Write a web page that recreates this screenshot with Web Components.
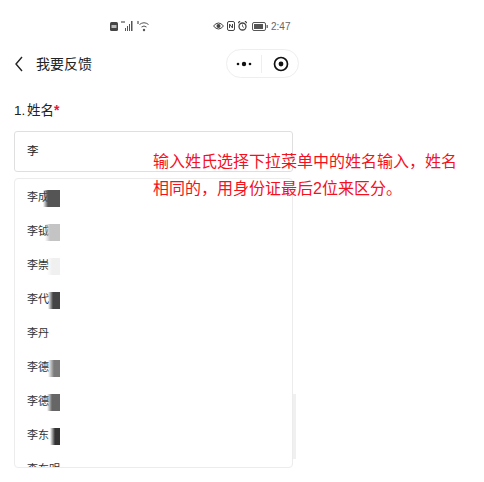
<!DOCTYPE html>
<html>
<head>
<meta charset="utf-8">
<style>
  html, body { margin: 0; padding: 0; background: #fff; }
  body { width: 484px; height: 482px; overflow: hidden; position: relative; font-family: "Liberation Sans", "Noto Sans CJK SC", sans-serif; color: #222; }
</style>
</head>
<body>
<status-bar></status-bar>
<nav-bar>我要反馈</nav-bar>
<form-field label="1. 姓名" value="李">
  <name-option shade="#555555" fade="0,5">李成</name-option>
  <name-option shade="#c4c4c4" fade="2,7">李钺</name-option>
  <name-option shade="#f0f0f0" fade="4,9">李崇</name-option>
  <name-option shade="#444444" fade="5,10">李代</name-option>
  <name-option>李丹</name-option>
  <name-option shade="#7a7a7a" fade="5,11">李德</name-option>
  <name-option shade="#666666" fade="4,9">李德</name-option>
  <name-option shade="#333333" fade="7,12">李东</name-option>
  <name-option>李东明</name-option>
</form-field>
<hint-note>输入姓氏选择下拉菜单中的姓名输入，姓名相同的，用身份证最后2位来区分。</hint-note>

<script>
class StatusBar extends HTMLElement {
  constructor() {
    super();
    this.attachShadow({ mode: 'open' }).innerHTML = `
<style>
  :host { display: flex; height: 40px; padding: 12px 0 0 110px; box-sizing: border-box; align-items: center; color: #666; font-size: 10px; }
  .left { display: flex; align-items: center; gap: 3px; width: 103px; }
  .right { display: flex; align-items: center; gap: 3px; }
  svg { display: block; }
</style>
<div class="left">
  <svg width="8" height="9" viewBox="0 0 8 9"><rect width="8" height="9" rx="1.500" fill="#444"/><rect x="1.500" y="3" width="5" height="3" fill="#bbb"/></svg>
  <svg width="13" height="10" viewBox="0 0 13 10" fill="#555"><rect x="0" y="0" width="4" height="2" fill="#999"/><rect x="4" y="7" width="1" height="3"/><rect x="6" y="5" width="1" height="5"/><rect x="8" y="3" width="1" height="7"/><rect x="10" y="0" width="1.500" height="10"/></svg>
  <svg width="13" height="11" viewBox="0 0 13 11" fill="none" stroke="#555"><path d="M2.500 3.500Q7 0 11.500 3.500M4.500 6Q7 4 9.500 6"/><circle cx="7" cy="9" r="1.200" fill="#555" stroke="none"/><rect x="0" y="0" width="2" height="3" fill="#999" stroke="none"/></svg>
</div>
<div class="right">
  <svg width="11" height="8" viewBox="0 0 11 8"><path d="M0.500 4Q5.500 -2 10.500 4Q5.500 10 0.500 4Z" fill="none" stroke="#444"/><circle cx="5.500" cy="4" r="2" fill="#444"/></svg>
  <svg width="8" height="10" viewBox="0 0 8 10"><rect x="0.500" y="0.500" width="7" height="9" rx="1.500" fill="#fff" stroke="#444"/><path d="M2.500 7V3L5.500 7V3" fill="none" stroke="#444"/></svg>
  <svg width="9" height="10" viewBox="0 0 9 10"><circle cx="4.500" cy="5.500" r="3.500" fill="#fff" stroke="#444" stroke-width="1.300"/><path d="M4.500 3.500V5.500L6 6.500" fill="none" stroke="#444" stroke-width=".8"/><path d="M0 2L2 0M9 2L7 0" stroke="#444" stroke-width="1.200"/></svg>
  <svg width="16" height="9" viewBox="0 0 16 9" style="margin-left:2px"><rect x="0.500" y="0.500" width="13" height="8" rx="1.500" fill="none" stroke="#555"/><rect x="2" y="2" width="9" height="5" fill="#555"/><rect x="14.500" y="3" width="1.500" height="3" fill="#777"/></svg>
  <span class="time">2:47</span>
</div>`;
  }
}

class NavBar extends HTMLElement {
  constructor() {
    super();
    this.attachShadow({ mode: 'open' }).innerHTML = `
<style>
  :host { display: flex; align-items: center; height: 47px; margin-bottom: 1px; box-sizing: border-box; padding-left: 15px; font-size: 14px; color: #222; }
  .back { display: block; margin-right: 13px; }
  .title { flex: 1; margin-bottom: 2px; }
  .capsule { display: flex; align-items: center; width: 73px; height: 29px; box-sizing: border-box; border: 1px solid #eeeeee; border-radius: 15px; margin-right: 185px; }
  .capsule > div { flex: 1; display: flex; justify-content: center; align-items: center; height: 100%; }
  .capsule > div:last-child { padding-left: 3px; }
  .sep { width: 1px; height: 18px; background: #eee; }
</style>
<svg class="back" width="8" height="16" viewBox="0 0 8 16"><path d="M7 1L1 8L7 15" fill="none" stroke="#222" stroke-width="1.400"/></svg>
<span class="title"><slot></slot></span>
<div class="capsule">
  <div><svg width="16" height="6" viewBox="0 0 16 6" fill="#111"><circle cx="2" cy="3" r="1.300"/><circle cx="8" cy="3" r="2.200"/><circle cx="14" cy="3" r="1.300"/></svg></div>
  <span class="sep"></span>
  <div><svg width="16" height="16" viewBox="0 0 16 16"><circle cx="8" cy="8" r="6.500" fill="none" stroke="#111" stroke-width="1.700"/><circle cx="8" cy="8" r="2.400" fill="#111"/></svg></div>
</div>`;
  }
}

const fieldTemplate = document.createElement('template');
fieldTemplate.innerHTML = `
<style>
  :host { display: block; padding: 0 14px; width: 279px; position: relative; }
  .label { font-size: 13.500px; line-height: 20px; padding-top: 12px; color: #222; word-spacing: -2px; }
  .star { color: #e6163c; font-weight: bold; font-size: 14px; }
  .input { margin-top: 10px; height: 41px; box-sizing: border-box; border: 1px solid #dfdfdf; border-radius: 3px; padding-left: 12px; font-size: 11.500px; line-height: 39px; color: #222; }
  .menu { position: relative; margin-top: 6px; height: 290px; box-sizing: border-box; border: 1px solid #ececec; border-radius: 4px; overflow: hidden; background: #fff; }
  .behind { position: absolute; right: 11px; bottom: 9px; width: 3px; height: 65px; background: #f0f0f0; }
</style>
<div class="label"><span class="text"></span><span class="star">*</span></div>
<div class="input"></div>
<div class="menu"><slot></slot></div>
<div class="behind"></div>
`;

class FormField extends HTMLElement {
  constructor() {
    super();
    const root = this.attachShadow({ mode: 'open' });
    root.appendChild(fieldTemplate.content.cloneNode(true));
    root.querySelector('.text').textContent = this.getAttribute('label');
    root.querySelector('.input').textContent = this.getAttribute('value');
  }
}

class NameOption extends HTMLElement {
  constructor() {
    super();
    const root = this.attachShadow({ mode: 'open' });
    const shade = this.getAttribute('shade');
    const fade = (this.getAttribute('fade') || '0,5').split(',');
    root.innerHTML = `
<style>
  :host { display: flex; align-items: center; position: relative; height: 34px; padding-left: 12px; font-size: 11px; color: #333; }
  .mask { position: absolute; left: 28px; top: 11px; width: 17px; height: 17px; }
</style>
<slot></slot>
${shade ? `<div class="mask" style="background: linear-gradient(90deg, transparent ${fade[0]}px, ${shade} ${fade[1]}px)"></div>` : ''}`;
  }
}

class HintNote extends HTMLElement {
  constructor() {
    super();
    this.attachShadow({ mode: 'open' }).innerHTML = `
<style>
  :host { display: block; position: absolute; left: 153px; top: 148px; width: 310px; font-size: 16px; line-height: 27px; color: #f5101e; }
</style>
<slot></slot>`;
  }
}

customElements.define('status-bar', StatusBar);
customElements.define('nav-bar', NavBar);
customElements.define('form-field', FormField);
customElements.define('name-option', NameOption);
customElements.define('hint-note', HintNote);
</script>
</body>
</html>
